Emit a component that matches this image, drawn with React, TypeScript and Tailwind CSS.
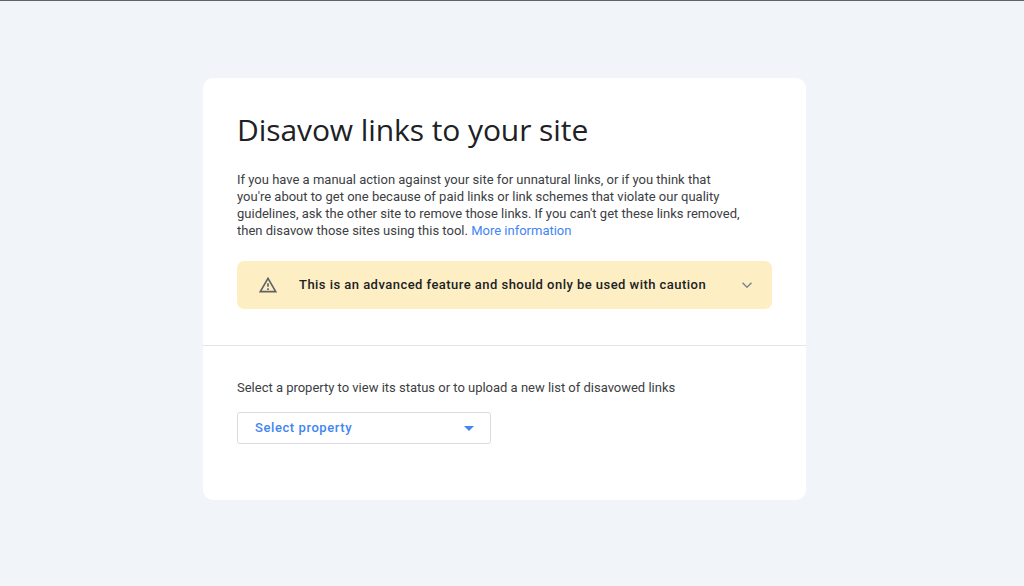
export default function App() {
  return (
    <div className="h-[586px] w-[1024px] overflow-hidden bg-[#f1f4f9] font-['Roboto','Liberation_Sans',sans-serif]">
      <div className="h-px bg-[#5f6368]" />
      <div className="ml-[203px] mt-[77px] h-[422px] w-[603px] rounded-[10px] bg-white">
        <div className="h-[268px] border-b border-[#e3e5e8] px-[34px] pt-[33px]">
          <h1 className="font-['Open_Sans','Roboto',sans-serif] text-[30px] leading-[38px] font-normal tracking-[-0.08px] text-[#202124]">
            Disavow links to your site
          </h1>
          <p className="mt-[22px] w-[508px] text-[13px] leading-[17px] text-[#3c4043]">
            If you have a manual action against your site for unnatural links, or if you think that you're about to get one because of paid links or link schemes that violate our quality guidelines, ask the other site to remove those links. If you can't get these links removed, then disavow those sites using this tool.{" "}
            <span className="text-[#4285f4]">More information</span>
          </p>
          <div className="mt-[22px] flex h-[48px] w-[535px] items-center rounded-[7px] bg-[#fdefc3] pl-[21px] pr-[16px]">
            <svg width="20" height="20" viewBox="0 0 24 24" fill="#5f6368" className="shrink-0">
              <path d="M12 5.99 19.53 19H4.47L12 5.99M12 2 1 21h22L12 2zm1 14h-2v2h2v-2zm0-6h-2v4h2v-4z" />
            </svg>
            <span className="ml-[21px] flex-1 text-[13px] font-medium tracking-[0.46px] text-[#202124]">
              This is an advanced feature and should only be used with caution
            </span>
            <svg width="18" height="18" viewBox="0 0 24 24" fill="none" stroke="#80868b" strokeWidth="2" className="shrink-0">
              <path d="m6 9 6 6 6-6" />
            </svg>
          </div>
        </div>
        <div className="px-[34px] pt-[33px]">
          <p className="text-[13px] leading-[17px] tracking-[-0.01px] text-[#3c4043]">
            Select a property to view its status or to upload a new list of disavowed links
          </p>
          <div className="mt-[16px] flex h-[32px] w-[254px] items-center justify-between rounded-[3px] border border-[#dadce0] pl-[17px] pr-[16px]">
            <span className="text-[13px] font-medium tracking-[0.58px] text-[#4285f4]">Select property</span>
            <svg width="10" height="5" viewBox="0 0 10 5" fill="#4285f4">
              <path d="M0 0h10L5 5z" />
            </svg>
          </div>
        </div>
      </div>
    </div>
  );
}
